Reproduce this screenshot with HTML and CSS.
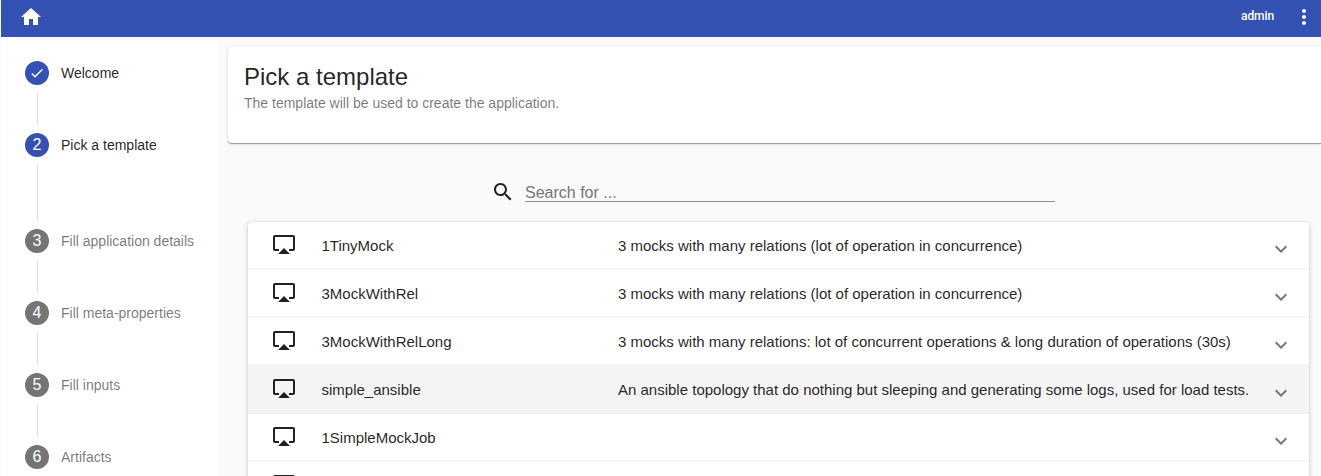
FILE: index.html
```html
<!DOCTYPE html>
<html lang="en">
<head>
<meta charset="utf-8">
<title>Pick a template</title>
<link rel="stylesheet" href="styles.css">
</head>
<body>
<svg class="defs" aria-hidden="true">
  <symbol id="airplay" viewBox="0 0 24 24"><path d="M6 22h12l-6-6zM21 3H3c-1.1 0-2 .9-2 2v12c0 1.1.9 2 2 2h4v-2H3V5h18v12h-4v2h4c1.1 0 2-.9 2-2V5c0-1.1-.9-2-2-2z"/></symbol>
  <symbol id="chevron" viewBox="0 0 24 24"><path d="M16.59 8.59 12 13.17 7.41 8.59 6 10l6 6 6-6z"/></symbol>
</svg>
<div class="app">
  <header class="toolbar">
    <svg class="icon home" viewBox="0 0 24 24"><path d="M10 20v-6h4v6h5v-8h3L12 3 2 12h3v8z"/></svg>
    <span class="user">admin</span>
    <svg class="icon" viewBox="0 0 24 24"><path d="M12 8c1.1 0 2-.9 2-2s-.9-2-2-2-2 .9-2 2 .9 2 2 2zm0 2c-1.1 0-2 .9-2 2s.9 2 2 2 2-.9 2-2-.9-2-2-2zm0 6c-1.1 0-2 .9-2 2s.9 2 2 2 2-.9 2-2-.9-2-2-2z"/></svg>
  </header>
  <div class="body">
    <nav class="stepper">
      <div class="step active"><span class="badge"><svg class="check" viewBox="0 0 24 24"><path d="M9 16.17 4.83 12l-1.42 1.41L9 19 21 7l-1.41-1.41z"/></svg></span><span>Welcome</span></div>
      <div class="line"></div>
      <div class="step active"><span class="badge">2</span><span>Pick a template</span></div>
      <div class="line tall"></div>
      <div class="step"><span class="badge">3</span><span>Fill application details</span></div>
      <div class="line"></div>
      <div class="step"><span class="badge">4</span><span>Fill meta-properties</span></div>
      <div class="line"></div>
      <div class="step"><span class="badge">5</span><span>Fill inputs</span></div>
      <div class="line"></div>
      <div class="step"><span class="badge">6</span><span>Artifacts</span></div>
    </nav>
    <main class="content">
      <section class="intro">
        <h1 class="title">Pick a template</h1>
        <p class="subtitle">The template will be used to create the application.</p>
      </section>
      <div class="search">
        <svg class="icon" viewBox="0 0 24 24"><path d="M15.5 14h-.79l-.28-.27C15.41 12.59 16 11.11 16 9.5 16 5.91 13.09 3 9.5 3S3 5.91 3 9.5 5.91 16 9.5 16c1.61 0 3.09-.59 4.23-1.57l.27.28v.79l5 4.99L20.49 19l-4.99-5zm-6 0C7.01 14 5 11.99 5 9.5S7.01 5 9.5 5 14 7.01 14 9.5 11.99 14 9.5 14z"/></svg>
        <input class="field" type="text" placeholder="Search for ...">
      </div>
      <div class="list">
        <div class="row"><svg class="icon"><use href="#airplay"/></svg><span class="name">1TinyMock</span><span class="desc">3 mocks with many relations (lot of operation in concurrence)</span><svg class="icon chevron"><use href="#chevron"/></svg></div>
        <div class="row"><svg class="icon"><use href="#airplay"/></svg><span class="name">3MockWithRel</span><span class="desc">3 mocks with many relations (lot of operation in concurrence)</span><svg class="icon chevron"><use href="#chevron"/></svg></div>
        <div class="row"><svg class="icon"><use href="#airplay"/></svg><span class="name">3MockWithRelLong</span><span class="desc">3 mocks with many relations: lot of concurrent operations &amp; long duration of operations (30s)</span><svg class="icon chevron"><use href="#chevron"/></svg></div>
        <div class="row hovered"><svg class="icon"><use href="#airplay"/></svg><span class="name">simple_ansible</span><span class="desc">An ansible topology that do nothing but sleeping and generating some logs, used for load tests.</span><svg class="icon chevron"><use href="#chevron"/></svg></div>
        <div class="row"><svg class="icon"><use href="#airplay"/></svg><span class="name">1SimpleMockJob</span><span class="desc"></span><svg class="icon chevron"><use href="#chevron"/></svg></div>
        <div class="row"><svg class="icon"><use href="#airplay"/></svg><span class="name"></span><span class="desc"></span><svg class="icon chevron"><use href="#chevron"/></svg></div>
      </div>
    </main>
  </div>
</div>
</body>
</html>
```
FILE: styles.css
```css
* { box-sizing: border-box; }
html, body { margin: 0; height: 100%; overflow: hidden; }
body { background: #fafafa; color: rgba(0, 0, 0, .87); font-family: "Liberation Sans", Arial, sans-serif; }
.defs { display: none; }
.app { height: 476px; padding-left: 1px; display: flex; flex-direction: column; overflow: hidden; }
.icon { width: 24px; height: 24px; flex: none; fill: currentColor; display: block; }

.toolbar { height: 37px; flex: none; display: flex; align-items: center; padding: 0 5px 4px 18px; background: #3452b4; color: #fff; }
.user { margin-left: auto; margin-right: 18px; padding-bottom: 2px; font: 500 12px/16px Roboto, sans-serif; letter-spacing: -.1px; }

.body { flex: 1; min-height: 0; display: flex; }
.stepper { width: 217px; flex: none; background: #fff; padding: 24px 0 0 24px; }
.step { display: flex; align-items: center; gap: 12px; height: 24px; font-size: 14px; color: rgba(0, 0, 0, .54); white-space: nowrap; }
.step.active { color: rgba(0, 0, 0, .87); }
.badge { width: 24px; height: 24px; border-radius: 50%; background: #757575; color: #fff; display: flex; align-items: center; justify-content: center; font-size: 16px; }
.active .badge { background: #3452b4; }
.check { width: 16px; height: 16px; fill: #fff; }
.line { width: 1px; height: 32px; margin: 8px 0 8px 12px; background: #dcdcdc; }
.line.tall { height: 56px; }

.content { flex: 1; min-width: 0; padding: 10px 0 0 10px; }
.intro { height: 96px; padding: 14px 16px; background: #fff; border-radius: 4px 0 0 4px; box-shadow: 0 1px 0 #9e9e9e, 0 1px 3px rgba(0, 0, 0, .2); }
.title { margin: 0; font-size: 24px; line-height: 32px; font-weight: 400; }
.subtitle { margin: 0; font-size: 14px; line-height: 20px; color: rgba(0, 0, 0, .54); }
.search { display: flex; gap: 10px; margin: 37px 0 0 263px; height: 24px; }
.field { width: 530px; height: 22px; padding: 3px 0 0; border: 0; border-bottom: 1px solid #8f8f8f; background: none; outline: 0; font: 16px/18px "Liberation Sans", Arial, sans-serif; padding-top: 4px; padding-bottom: 0; }
.field::placeholder { color: #757575; }
.list { width: 1061px; margin: 18px 0 0 20px; background: #fff; border-radius: 4px; box-shadow: 0 1px 5px rgba(0, 0, 0, .2), 0 0 1px rgba(0, 0, 0, .12); overflow: hidden; }
.row { display: flex; height: 48px; padding: 10px 16px 0 24px; border-bottom: 2px solid #f6f6f6; font-size: 15px; line-height: 28px; white-space: nowrap; }
.row.hovered { background: #f4f4f4; border-bottom-color: #f0f0f0; }
.name { width: 322px; padding-left: 25.5px; }
.desc { flex: 1; min-width: 0; }
.chevron { margin-top: 5px; color: #757575; }
```
